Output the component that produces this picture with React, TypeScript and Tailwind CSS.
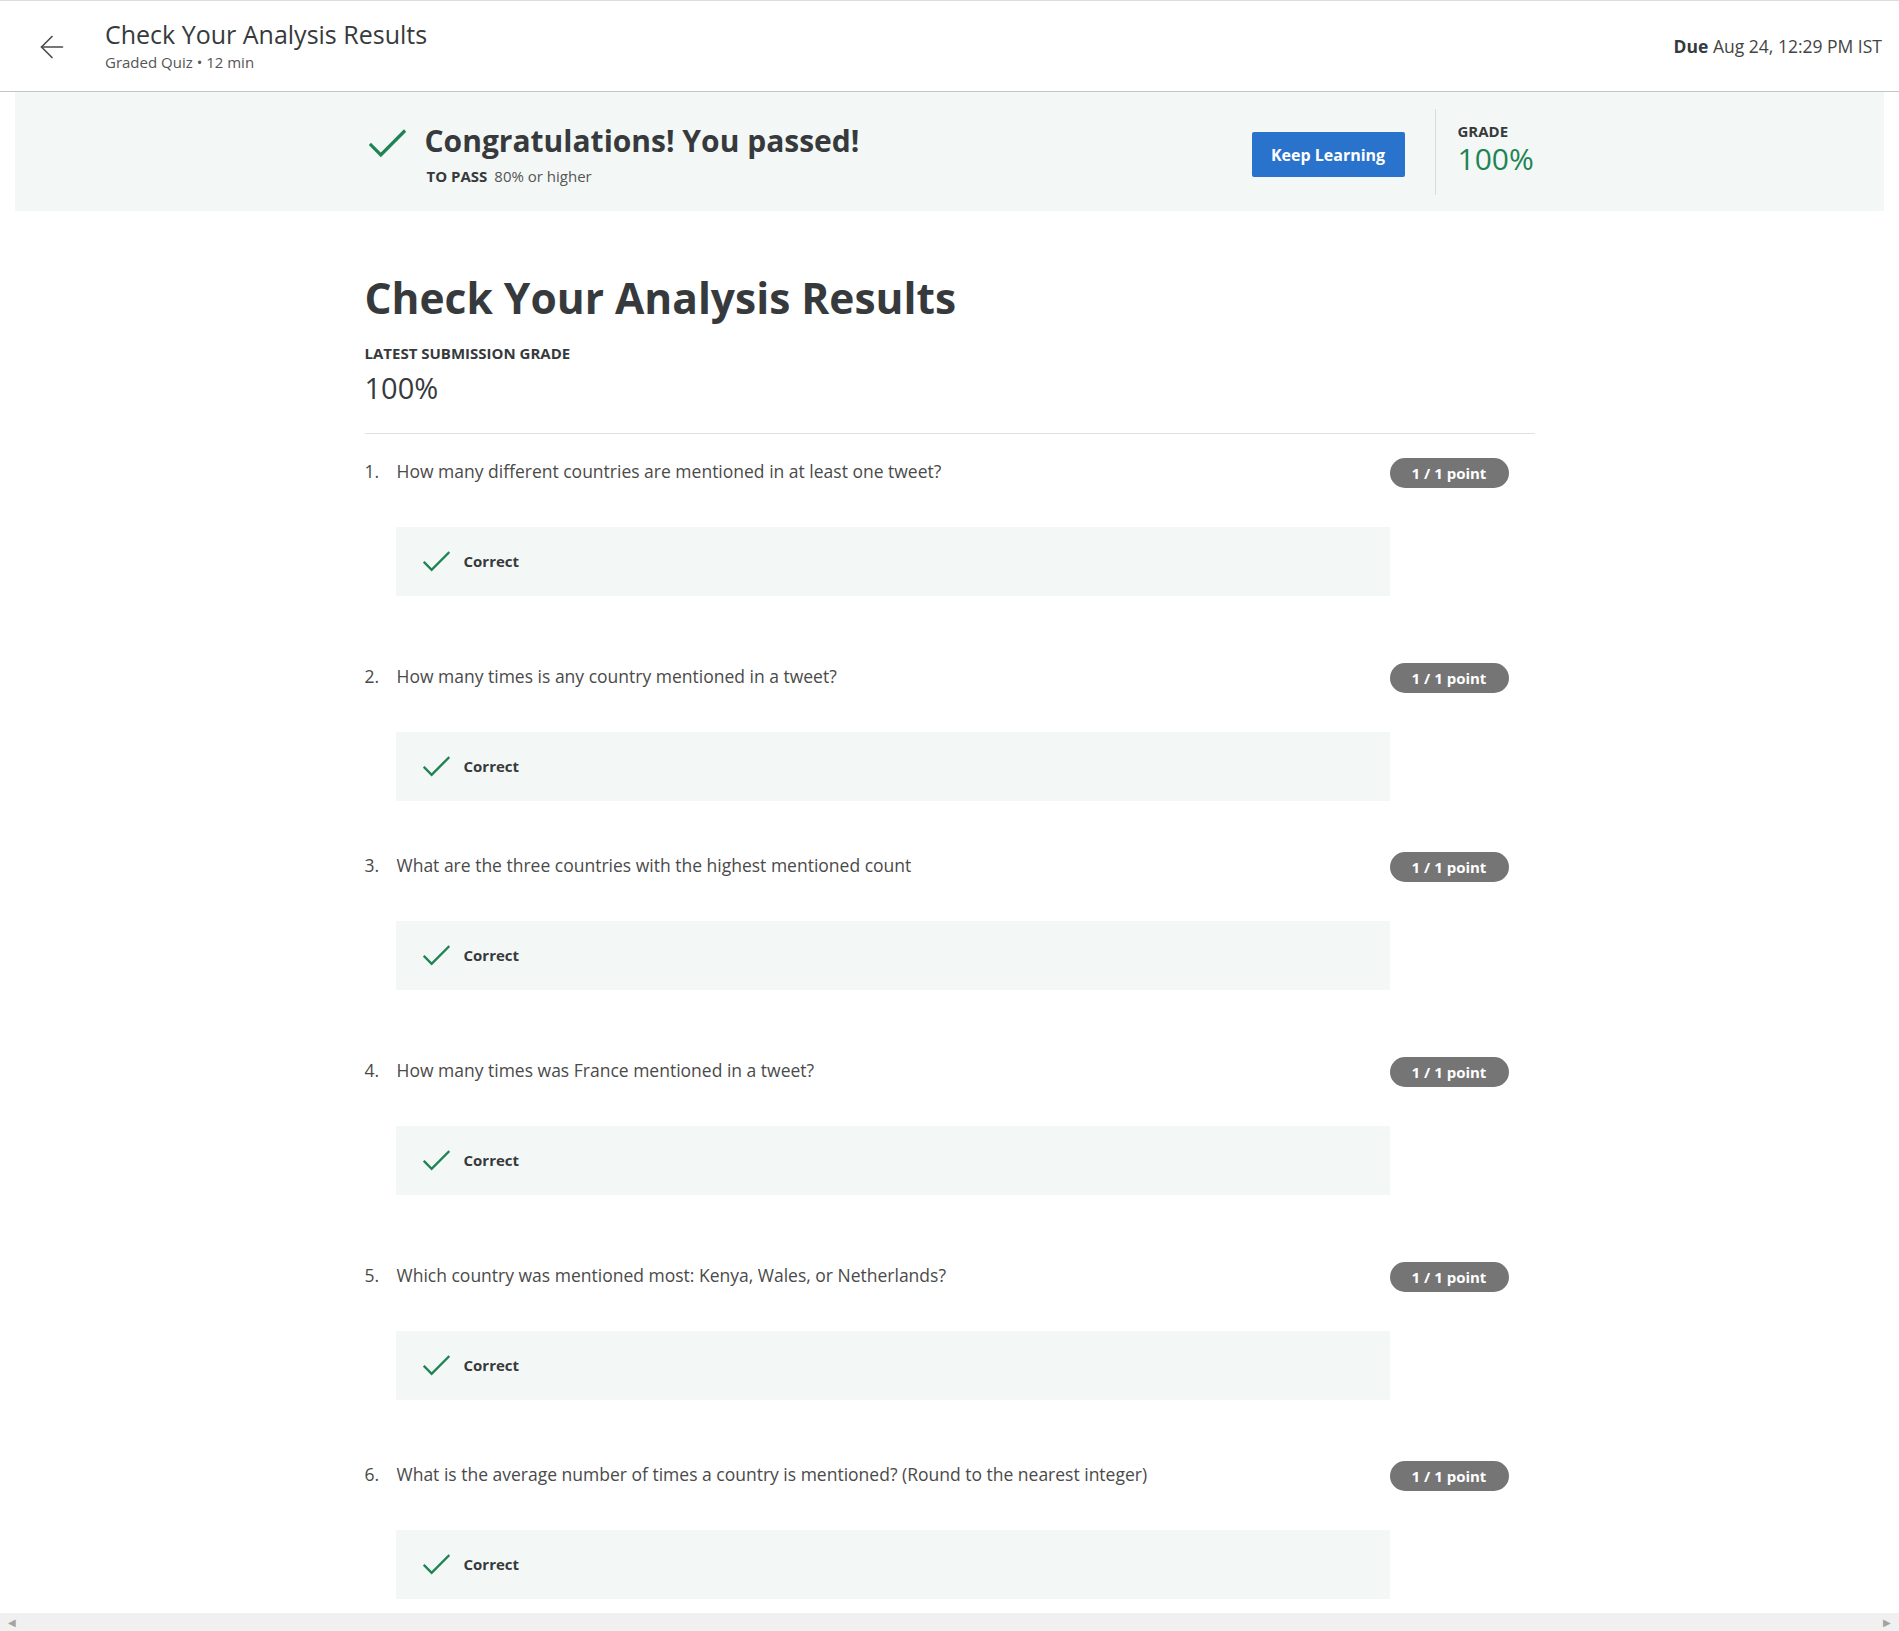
import { ArrowLeft } from "lucide-react"

const questions = [
    { n: 1, text: "How many different countries are mentioned in at least one tweet?", gap: "pt-[25px]" },
    { n: 2, text: "How many times is any country mentioned in a tweet?", gap: "pt-[68px]" },
    { n: 3, text: "What are the three countries with the highest mentioned count", gap: "pt-[52px]" },
    { n: 4, text: "How many times was France mentioned in a tweet?", gap: "pt-[68px]" },
    { n: 5, text: "Which country was mentioned most: Kenya, Wales, or Netherlands?", gap: "pt-[68px]" },
    { n: 6, text: "What is the average number of times a country is mentioned? (Round to the nearest integer)", gap: "pt-[62px]" },
]

function Check({ className }: { className?: string }) {
    return (
        <svg viewBox="0 0 36 28" fill="none" className={className}>
            <path d="M2 15.5 L11.5 25 L34 2.5" stroke="#1f8354" strokeWidth="3.2" strokeLinecap="square" />
        </svg>
    )
}

function Header() {
    return (
        <div className="flex h-[92px] shrink-0 items-start justify-between border-t border-b border-t-[#dcdcdc] border-b-[#c4c4c4] bg-white">
            <div className="flex items-start">
                <div className="ml-[34px] mt-[28px] text-[#4a4a4a]">
                    <ArrowLeft className="h-[36px] w-[36px]" strokeWidth={1.1} />
                </div>
                <div className="ml-[35px] pt-[18px]">
                    <div className="text-[25px] leading-[30px] text-[#373a3c]">Check Your Analysis Results</div>
                    <div className="mt-[3px] text-[15px] leading-[20px] text-[#555]">Graded Quiz • 12 min</div>
                </div>
            </div>
            <div className="pr-[17px] pt-[33px] text-[17.5px] leading-[24px] text-[#444]">
                <span className="font-bold text-[#373a3c]">Due</span> Aug 24, 12:29 PM IST
            </div>
        </div>
    )
}

function Banner() {
    return (
        <div className="mx-[15px] h-[119px] shrink-0 bg-[#f3f8f6]">
            <div className="mx-auto flex h-full w-[1170px] justify-between">
                <div className="flex items-start">
                    <Check className="ml-[4px] mt-[37px] h-[29px] w-[37px]" />
                    <div className="ml-[19px] pt-[30px]">
                        <div className="text-[30px] font-bold leading-[38px] text-[#373a3c]">Congratulations! You passed!</div>
                        <div className="mt-[6px] pl-[2px] text-[15px] leading-[20px] text-[#555]">
                            <span className="mr-[7px] font-bold text-[#373a3c]">TO PASS</span>80% or higher
                        </div>
                    </div>
                </div>
                <div className="flex items-center">
                    <button className="mt-[6px] h-[45px] w-[153px] rounded-[2px] bg-[#2a73cc] text-[16px] font-bold text-white">
                        Keep Learning
                    </button>
                    <div className="ml-[30px] h-[86px] w-px bg-[#dcdcdc]" />
                    <div className="w-[99px] pl-[22px] pb-[4px]">
                        <div className="text-[15px] font-bold leading-[18px] text-[#373a3c]">GRADE</div>
                        <div className="text-[30px] leading-[38px] text-[#1f8354]">100%</div>
                    </div>
                </div>
            </div>
        </div>
    )
}

function Question({ n, text, gap }: { n: number; text: string; gap: string }) {
    return (
        <div className={`flex ${gap} pr-[26px]`}>
            <div className="w-[31px] text-[17.5px] leading-[24px] text-[#4a4a4a]">{n}.</div>
            <div className="flex-1">
                <div className="pl-[1px] text-[17.5px] leading-[24px] text-[#4a4a4a]">{text}</div>
                <div className="mt-[44px] flex h-[69px] items-center bg-[#f3f8f6] pl-[27px]">
                    <Check className="h-[21px] w-[27px]" />
                    <span className="ml-[14px] text-[15px] font-bold text-[#373a3c]">Correct</span>
                </div>
            </div>
            <div className="-mt-[1px] flex h-[30px] w-[119px] items-center justify-center self-start rounded-full bg-[#757575] text-[15px] font-bold text-white">
                1 / 1 point
            </div>
        </div>
    )
}

export default function App() {
    return (
        <div className="flex h-[1631px] flex-col overflow-hidden bg-white font-['Open_Sans',sans-serif]">
            <Header />
            <Banner />
            <div className="min-h-0 flex-1 overflow-hidden">
                <div className="mx-auto w-[1170px]">
                    <h1 className="mt-[61px] text-[42.5px] font-bold leading-[52px] text-[#373a3c]">Check Your Analysis Results</h1>
                    <div className="mt-[19px] text-[15px] font-bold leading-[20px] text-[#373a3c]">LATEST SUBMISSION GRADE</div>
                    <div className="mt-[7px] text-[29px] leading-[36px] text-[#373a3c]">100%</div>
                    <div className="mt-[27px] h-px bg-[#e1e1e1]" />
                    {questions.map((q) => (
                        <Question key={q.n} {...q} />
                    ))}
                </div>
            </div>
            <div className="flex h-[18px] shrink-0 items-center justify-between bg-[#f0f0f0] px-[8px] text-[10px] text-[#a3a3a3]">
                <span>◀</span>
                <span>▶</span>
            </div>
        </div>
    )
}
